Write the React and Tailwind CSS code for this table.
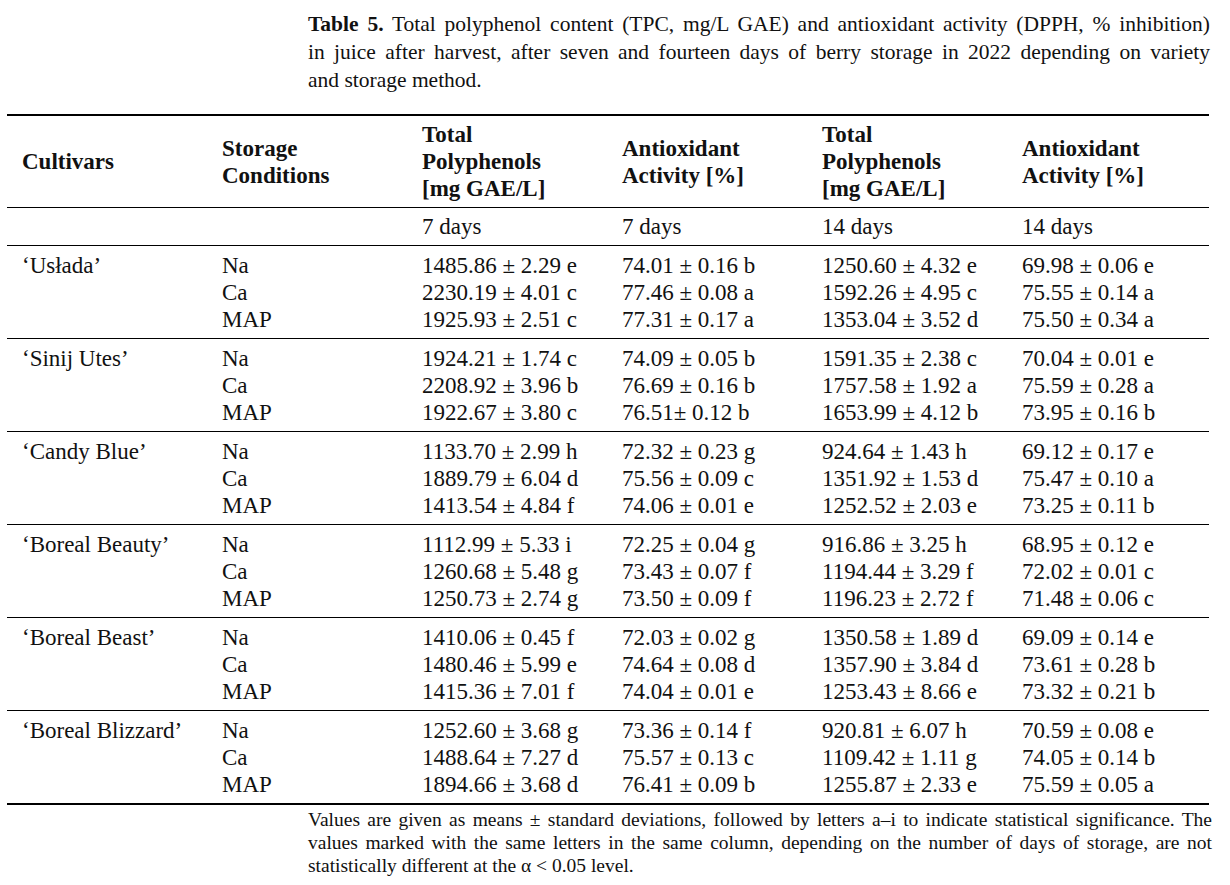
import React from 'react';

const groups = [
  {
    name: '‘Usłada’',
    rows: [
      ['Na', '1485.86 ± 2.29 e', '74.01 ± 0.16 b', '1250.60 ± 4.32 e', '69.98 ± 0.06 e'],
      ['Ca', '2230.19 ± 4.01 c', '77.46 ± 0.08 a', '1592.26 ± 4.95 c', '75.55 ± 0.14 a'],
      ['MAP', '1925.93 ± 2.51 c', '77.31 ± 0.17 a', '1353.04 ± 3.52 d', '75.50 ± 0.34 a'],
    ],
  },
  {
    name: '‘Sinij Utes’',
    rows: [
      ['Na', '1924.21 ± 1.74 c', '74.09 ± 0.05 b', '1591.35 ± 2.38 c', '70.04 ± 0.01 e'],
      ['Ca', '2208.92 ± 3.96 b', '76.69 ± 0.16 b', '1757.58 ± 1.92 a', '75.59 ± 0.28 a'],
      ['MAP', '1922.67 ± 3.80 c', '76.51± 0.12 b', '1653.99 ± 4.12 b', '73.95 ± 0.16 b'],
    ],
  },
  {
    name: '‘Candy Blue’',
    rows: [
      ['Na', '1133.70 ± 2.99 h', '72.32 ± 0.23 g', '924.64 ± 1.43 h', '69.12 ± 0.17 e'],
      ['Ca', '1889.79 ± 6.04 d', '75.56 ± 0.09 c', '1351.92 ± 1.53 d', '75.47 ± 0.10 a'],
      ['MAP', '1413.54 ± 4.84 f', '74.06 ± 0.01 e', '1252.52 ± 2.03 e', '73.25 ± 0.11 b'],
    ],
  },
  {
    name: '‘Boreal Beauty’',
    rows: [
      ['Na', '1112.99 ± 5.33 i', '72.25 ± 0.04 g', '916.86 ± 3.25 h', '68.95 ± 0.12 e'],
      ['Ca', '1260.68 ± 5.48 g', '73.43 ± 0.07 f', '1194.44 ± 3.29 f', '72.02 ± 0.01 c'],
      ['MAP', '1250.73 ± 2.74 g', '73.50 ± 0.09 f', '1196.23 ± 2.72 f', '71.48 ± 0.06 c'],
    ],
  },
  {
    name: '‘Boreal Beast’',
    rows: [
      ['Na', '1410.06 ± 0.45 f', '72.03 ± 0.02 g', '1350.58 ± 1.89 d', '69.09 ± 0.14 e'],
      ['Ca', '1480.46 ± 5.99 e', '74.64 ± 0.08 d', '1357.90 ± 3.84 d', '73.61 ± 0.28 b'],
      ['MAP', '1415.36 ± 7.01 f', '74.04 ± 0.01 e', '1253.43 ± 8.66 e', '73.32 ± 0.21 b'],
    ],
  },
  {
    name: '‘Boreal Blizzard’',
    rows: [
      ['Na', '1252.60 ± 3.68 g', '73.36 ± 0.14 f', '920.81 ± 6.07 h', '70.59 ± 0.08 e'],
      ['Ca', '1488.64 ± 7.27 d', '75.57 ± 0.13 c', '1109.42 ± 1.11 g', '74.05 ± 0.14 b'],
      ['MAP', '1894.66 ± 3.68 d', '76.41 ± 0.09 b', '1255.87 ± 2.33 e', '75.59 ± 0.05 a'],
    ],
  },
];

const cols = 'grid grid-cols-[200px_200px_200px_200px_200px_202px]';

function HeadCell({ lines }) {
  return (
    <div className="flex flex-col justify-center pl-[15px] font-bold leading-[27px]">
      {lines.map((l) => (
        <div key={l}>{l}</div>
      ))}
    </div>
  );
}

export default function App() {
  return (
    <div className="w-[1230px] h-[885px] bg-white text-[#111] font-['Liberation_Serif',serif] overflow-hidden">
      {/* Caption */}
      <div className="ml-[308px] w-[902px] pt-[10px] text-[21.5px] leading-[28px] whitespace-nowrap">
        <div className="[text-align-last:justify]">
          <span className="font-bold">Table 5.</span> Total polyphenol content (TPC, mg/L GAE) and antioxidant activity (DPPH, % inhibition)
        </div>
        <div className="[text-align-last:justify]">
          in juice after harvest, after seven and fourteen days of berry storage in 2022 depending on variety
        </div>
        <div>and storage method.</div>
      </div>

      {/* Table */}
      <div className="ml-[7px] mt-[20px] w-[1202px] text-[23px]">
        <div className={`${cols} h-[94px] border-t-2 border-b border-black`}>
          <HeadCell lines={['Cultivars']} />
          <HeadCell lines={['Storage', 'Conditions']} />
          <HeadCell lines={['Total', 'Polyphenols', '[mg GAE/L]']} />
          <HeadCell lines={['Antioxidant', 'Activity [%]']} />
          <HeadCell lines={['Total', 'Polyphenols', '[mg GAE/L]']} />
          <HeadCell lines={['Antioxidant', 'Activity [%]']} />
        </div>
        <div className={`${cols} h-[38px] items-center border-b border-black leading-[27px]`}>
          <div />
          <div />
          <div className="pl-[15px]">7 days</div>
          <div className="pl-[15px]">7 days</div>
          <div className="pl-[15px]">14 days</div>
          <div className="pl-[15px]">14 days</div>
        </div>
        {groups.map((g, gi) => (
          <div
            key={g.name}
            className={`pt-[6px] pb-[5px] ${gi < groups.length - 1 ? 'border-b border-black' : 'border-b-2 border-black'}`}
          >
            {g.rows.map((r, ri) => (
              <div key={r[0]} className={`${cols} h-[27px] leading-[27px] whitespace-nowrap`}>
                <div className="pl-[15px]">{ri === 0 ? g.name : ''}</div>
                {r.map((v, vi) => (
                  <div key={vi} className="pl-[15px]">{v}</div>
                ))}
              </div>
            ))}
          </div>
        ))}
      </div>

      {/* Footnote */}
      <div className="ml-[308px] w-[904px] pt-[3px] text-[19.5px] leading-[23px] whitespace-nowrap">
        <div className="[text-align-last:justify]">
          Values are given as means ± standard deviations, followed by letters a–i to indicate statistical significance. The
        </div>
        <div className="[text-align-last:justify]">
          values marked with the same letters in the same column, depending on the number of days of storage, are not
        </div>
        <div>statistically different at the α &lt; 0.05 level.</div>
      </div>
    </div>
  );
}
